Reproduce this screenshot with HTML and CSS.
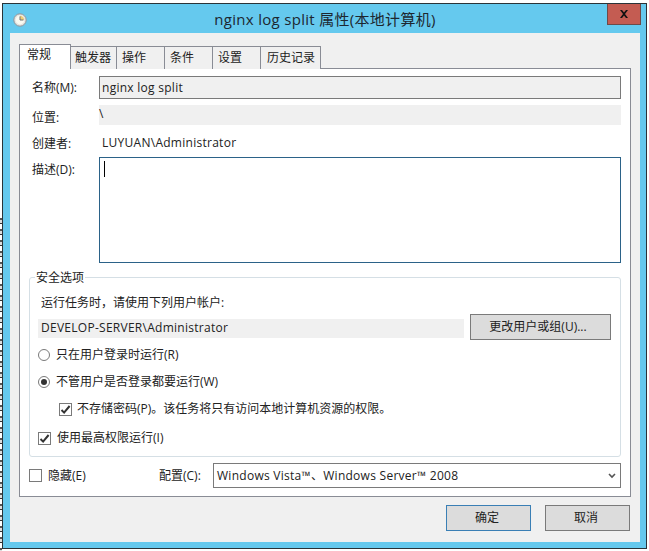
FILE: index.html
```html
<!DOCTYPE html>
<html lang="zh-CN">
<head>
<meta charset="utf-8">
<title>nginx log split 属性(本地计算机)</title>
<link rel="stylesheet" href="styles.css">
</head>
<body>
<div class="desktop">
  <div class="edge"></div>
  <div class="window">
    <div class="titlebar">
      <svg class="app-icon" width="14" height="14" viewBox="0 0 14 14">
        <circle cx="7" cy="7" r="6.2" fill="#e4e4e0" stroke="#8f959b"/>
        <circle cx="7" cy="7" r="4.4" fill="#fbfaf2"/>
        <path d="M7 7V2.8A4.2 4.2 0 0 1 11.2 7z" fill="#f0cf7c"/>
        <path d="M7 3.4V7h3.4" fill="none" stroke="#6f7276" stroke-width="1"/>
      </svg>
      <div class="title">nginx log split 属性(本地计算机)</div>
      <div class="close">
        <svg width="10" height="8" viewBox="0 0 10 8"><path d="M1 0h2l2 2.4L7 0h2L6 4l3 4H7L5 5.6 3 8H1l3-4z" fill="#111"/></svg>
      </div>
    </div>
    <div class="client">
      <div class="tabs">
        <div class="tab active">常规</div>
        <div class="tab w46">触发器</div>
        <div class="tab w48">操作</div>
        <div class="tab w48">条件</div>
        <div class="tab w48">设置</div>
        <div class="tab w60">历史记录</div>
      </div>
      <div class="panel">
        <div class="row h23">
          <div class="label">名称(M):</div>
          <div class="field ro-input latin">nginx log split</div>
        </div>
        <div class="row h20 mt6">
          <div class="label lower">位置:</div>
          <div class="field ro-flat">\</div>
        </div>
        <div class="row h20 mt8">
          <div class="label creator">创建者:</div>
          <div class="field plain latin">LUYUAN\Administrator</div>
        </div>
        <div class="row desc">
          <div class="label">描述(D):</div>
          <div class="textarea"><span class="caret"></span></div>
        </div>
        <fieldset class="group">
          <legend>安全选项</legend>
          <div class="run-as">运行任务时，请使用下列用户帐户:</div>
          <div class="account">
            <div class="account-name latin">DEVELOP-SERVER\Administrator</div>
            <div class="btn change">更改用户或组(U)...</div>
          </div>
          <div class="opt opt-r1"><span class="radio"></span>只在用户登录时运行(R)</div>
          <div class="opt opt-r2"><span class="radio on"></span>不管用户是否登录都要运行(W)</div>
          <div class="opt opt-c1">
            <span class="check"><svg width="11" height="11" viewBox="0 0 11 11"><path d="M1.5 6l2.6 2.6L9.6 2" fill="none" stroke="#333" stroke-width="2"/></svg></span>不存储密码(P)。该任务将只有访问本地计算机资源的权限。
          </div>
          <div class="opt opt-c2">
            <span class="check"><svg width="11" height="11" viewBox="0 0 11 11"><path d="M1.5 6l2.6 2.6L9.6 2" fill="none" stroke="#333" stroke-width="2"/></svg></span>使用最高权限运行(I)
          </div>
        </fieldset>
        <div class="bottom">
          <div class="hide"><span class="check"></span>隐藏(E)</div>
          <div class="config-label">配置(C):</div>
          <div class="select">
            <span class="latin">Windows Vista™、Windows Server™ 2008</span>
            <svg width="8" height="6" viewBox="0 0 8 6"><path d="M1 1l3 3 3-3" fill="none" stroke="#555" stroke-width="1.6"/></svg>
          </div>
        </div>
      </div>
      <div class="footer">
        <div class="btn primary">确定</div>
        <div class="btn">取消</div>
      </div>
    </div>
  </div>
</div>
</body>
</html>
```
FILE: styles.css
```css
* { box-sizing: border-box; }
html, body { margin: 0; background: #fff; }
body {
  font: 12px/16px "Open Sans", "Noto Sans CJK SC", sans-serif;
  color: #222;
  overflow: hidden;
}
.desktop {
  display: flex;
  align-items: flex-start;
  height: 551px;
  padding-top: 3px;
}
.edge {
  width: 2px;
  height: 338px;
  margin-top: 210px;
  flex: none;
  background: repeating-linear-gradient(#fff 0 5px, #555 5px 7px, #ddd 7px 10px, #333 10px 11px);
}
.latin { letter-spacing: .27px; }
.window {
  width: 645px;
  height: 546px;
  flex: none;
  border: 1px solid #2a3338;
  background: #65c9ee;
  padding: 0 6px 6px 7px;
}
.titlebar {
  height: 29px;
  display: grid;
  grid-template-columns: 1fr auto 1fr;
  align-items: start;
}
.app-icon { margin: 9px 0 0 3px; }
.title {
  font-size: 15px;
  line-height: 20px;
  padding-top: 5px;
  letter-spacing: .3px;
  color: #1d2730;
}
.close {
  justify-self: end;
  width: 34px;
  height: 21px;
  margin-right: -1px;
  background: #c45c52;
  border: 1px solid #6e4a48;
  border-top: 0;
  display: flex;
  align-items: center;
  justify-content: center;
}
.client {
  height: 509px;
  background: #f0f0f0;
  padding: 11px 9px 0;
}
.tabs {
  display: flex;
  align-items: flex-end;
  height: 25px;
  margin-bottom: -1px;
}
.tab {
  height: 23px;
  padding-left: 4px;
  background: #f0f0f0;
  border: 1px solid #898c95;
  border-left: 0;
  border-bottom: 0;
  line-height: 22px;
}
.tab.active {
  width: 52px;
  height: 25px;
  padding: 0 0 3px 7px;
  background: #fff;
  border-left: 1px solid #898c95;
  position: relative;
  z-index: 1;
  line-height: 20px;
}
.w46 { width: 46px; }
.w48 { width: 48px; padding-left: 5px; }
.w60 { width: 60px; padding-left: 6px; }
.panel {
  height: 429px;
  background: #fff;
  border: 1px solid #898c95;
  padding: 7px 9px 0;
}
.row { display: flex; }
.h23 { height: 23px; }
.h20 { height: 20px; }
.mt6 { margin-top: 6px; }
.mt8 { margin-top: 8px; }
.label {
  width: 70px;
  padding: 4px 0 0 3px;
  flex: none;
}
.label.lower { padding-top: 5px; }
.label.creator { padding-top: 3px; }
.field { flex: 1; padding: 0 2px; line-height: 20px; }
.ro-input {
  background: #f0f0f0;
  border: 1px solid #7a7a7a;
  padding: 1px 0 0 2px;
}
.ro-flat { background: #f0f0f0; padding-left: 0; line-height: 18px; }
.plain { padding-left: 3px; }
.desc { margin-top: 4px; height: 106px; }
.desc .label { padding-top: 5px; }
.textarea {
  flex: 1;
  border: 1px solid #2b6288;
  padding: 3px 4px;
}
.caret { display: block; width: 1px; height: 16px; background: #000; }
.group {
  margin: 6px 0 0;
  padding: 9px 9px 0 8px;
  height: 188px;
  border: 1px solid #d5dfe5;
  border-radius: 3px;
}
.group legend { padding: 2px 1px 0; margin-left: -3px; line-height: 14px; }
.run-as { padding: 1px 0 0 3px; }
.account {
  display: flex;
  align-items: center;
  margin-top: 3px;
  height: 26px;
}
.account-name {
  width: 426px;
  height: 19px;
  margin-top: 2px;
  background: #f0f0f0;
  padding-left: 3px;
  line-height: 18px;
}
.btn {
  width: 85px;
  height: 26px;
  padding-right: 3px;
  background: #dcdcdc;
  border: 1px solid #7a7a7a;
  display: flex;
  align-items: center;
  justify-content: center;
}
.btn.primary { border-color: #3a7fb5; }
.change { width: 141px; margin-left: 6px; padding-right: 5px; }
.opt { display: flex; align-items: center; height: 16px; }
.opt-r1 { margin-top: 7px; }
.opt-r2 { margin-top: 11px; }
.opt-c1 { margin-top: 11px; padding-left: 21px; }
.opt-c1 .check { margin-right: 5px; }
.opt-c2 { margin-top: 13px; }
.radio {
  width: 12px;
  height: 12px;
  border: 1px solid #7a7a7a;
  border-radius: 50%;
  margin-right: 6px;
  flex: none;
  display: flex;
  align-items: center;
  justify-content: center;
}
.radio.on::after {
  content: "";
  width: 6px;
  height: 6px;
  border-radius: 50%;
  background: #333;
}
.check {
  width: 13px;
  height: 13px;
  border: 1px solid #7a7a7a;
  margin-right: 6px;
  flex: none;
  display: flex;
  align-items: center;
  justify-content: center;
}
.bottom { display: flex; align-items: center; margin-top: 6px; height: 25px; }
.hide { display: flex; align-items: center; width: 130px; }
.config-label { width: 54px; }
.select {
  flex: 1;
  height: 25px;
  border: 1px solid #7a7a7a;
  padding: 0 4px 0 3px;
  display: flex;
  align-items: center;
  justify-content: space-between;
}
.footer {
  display: flex;
  justify-content: flex-end;
  gap: 14px;
  margin-top: 8px;
  padding-right: 1px;
}
```
